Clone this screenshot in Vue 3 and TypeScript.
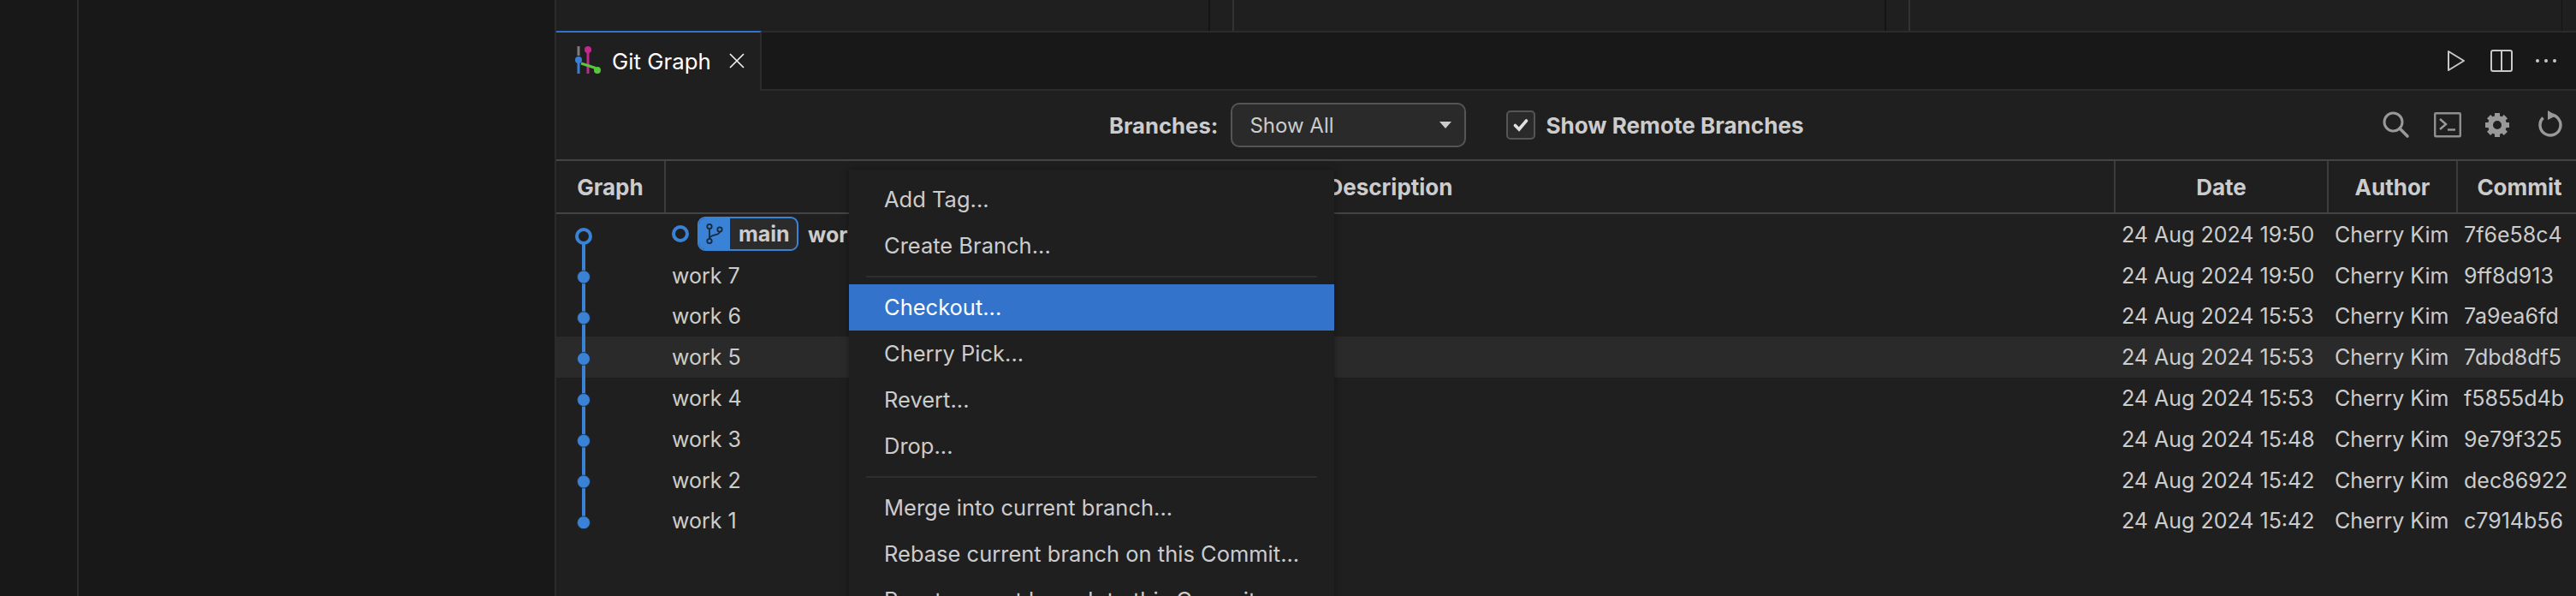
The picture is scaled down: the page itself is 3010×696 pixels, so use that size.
<script setup lang="ts">
type MenuEntry = { label: string; active?: boolean } | { separator: true }

const commits = [
  { title: 'work 8', date: '24 Aug 2024 19:50', hash: '7f6e58c4' },
  { title: 'work 7', date: '24 Aug 2024 19:50', hash: '9ff8d913' },
  { title: 'work 6', date: '24 Aug 2024 15:53', hash: '7a9ea6fd' },
  { title: 'work 5', date: '24 Aug 2024 15:53', hash: '7dbd8df5' },
  { title: 'work 4', date: '24 Aug 2024 15:53', hash: 'f5855d4b' },
  { title: 'work 3', date: '24 Aug 2024 15:48', hash: '9e79f325' },
  { title: 'work 2', date: '24 Aug 2024 15:42', hash: 'dec86922' },
  { title: 'work 1', date: '24 Aug 2024 15:42', hash: 'c7914b56' },
]

const menu: MenuEntry[] = [
  { label: 'Add Tag...' },
  { label: 'Create Branch...' },
  { separator: true },
  { label: 'Checkout...', active: true },
  { label: 'Cherry Pick...' },
  { label: 'Revert...' },
  { label: 'Drop...' },
  { separator: true },
  { label: 'Merge into current branch...' },
  { label: 'Rebase current branch on this Commit...' },
  { label: 'Reset current branch to this Commit...' },
]

const dots = [73.5, 121.3, 169, 217, 264.8, 312.5, 360.3]
const gearTeeth = [0, 45, 90, 135, 180, 225, 270, 315]
</script>

<template>
  <div class="window">
    <div class="activity"></div>
    <div class="sidebar"></div>
    <main class="editor">
      <div class="top-panes">
        <div class="pane first"></div>
        <div class="sash"></div>
        <div class="pane second"></div>
        <div class="sash"></div>
        <div class="pane third"></div>
      </div>

      <div class="tabbar">
        <div class="tab">
          <svg class="tab-icon" width="32" height="36" viewBox="0 0 32 36">
            <rect x="3.5" y="1" width="3" height="11" fill="#7d7d7d" />
            <rect x="3.5" y="20" width="3" height="13" fill="#3a7fd5" />
            <rect x="14.5" y="8" width="3" height="25" fill="#c4288f" />
            <circle cx="16" cy="5" r="4" fill="#c4288f" />
            <line x1="8" y1="21" x2="25" y2="26.5" stroke="#55c93a" stroke-width="3" />
            <circle cx="5" cy="17" r="4" fill="#3a7fd5" />
            <circle cx="27" cy="29" r="4" fill="#55c93a" />
          </svg>
          <span class="tab-title">Git Graph</span>
          <svg class="tab-close" width="18" height="18" viewBox="0 0 18 18">
            <path d="M1 1l16 16M17 1L1 17" stroke="#f0f0f0" stroke-width="1.7" fill="none" />
          </svg>
        </div>
        <div class="tab-actions">
          <svg class="play" width="22" height="26" viewBox="0 0 22 26">
            <path d="M2 2l18 11L2 24z" fill="none" stroke="#c8c8c8" stroke-width="2" stroke-linejoin="round" />
          </svg>
          <svg width="26" height="26" viewBox="0 0 26 26">
            <rect x="1" y="1" width="24" height="24" rx="2" fill="none" stroke="#c8c8c8" stroke-width="2" />
            <line x1="13" y1="1" x2="13" y2="25" stroke="#c8c8c8" stroke-width="2" />
          </svg>
          <svg width="26" height="6" viewBox="0 0 26 6">
            <circle cx="3" cy="3" r="2" fill="#c8c8c8" />
            <circle cx="13" cy="3" r="2" fill="#c8c8c8" />
            <circle cx="23" cy="3" r="2" fill="#c8c8c8" />
          </svg>
        </div>
      </div>

      <div class="toolbar">
        <div class="controls">
          <span class="branch-label">Branches:</span>
          <div class="select">
            <span>Show All</span>
            <i class="select-arrow"></i>
          </div>
          <div class="checkbox">
            <svg width="20" height="18" viewBox="0 0 20 18">
              <path d="M3.5 9.5l4.5 4.5L16.5 4" fill="none" stroke="#e0e0e0" stroke-width="3.6" stroke-linecap="round" />
            </svg>
          </div>
          <span class="remote-label">Show Remote Branches</span>
        </div>
        <div class="tools">
          <svg width="32" height="32" viewBox="0 0 32 32">
            <circle cx="12.5" cy="12.5" r="10.5" fill="none" stroke="#999" stroke-width="3" />
            <line x1="20" y1="20" x2="29" y2="29" stroke="#999" stroke-width="3.6" stroke-linecap="round" />
          </svg>
          <svg width="32" height="30" viewBox="0 0 32 30">
            <rect x="1.2" y="1.2" width="29.6" height="27" rx="1" fill="none" stroke="#8f8f8f" stroke-width="2.4" />
            <path d="M7 8l7 6-7 6" fill="none" stroke="#999" stroke-width="2.4" />
            <line x1="16" y1="20.5" x2="25" y2="20.5" stroke="#999" stroke-width="2.4" />
          </svg>
          <svg class="gear" width="28" height="30" viewBox="0 0 28 30">
            <g transform="translate(14 15)">
              <rect
                v-for="deg in gearTeeth"
                :key="deg"
                x="-3"
                y="-14"
                width="6"
                height="7"
                fill="#999"
                :transform="`rotate(${deg})`"
              />
              <circle r="8" fill="none" stroke="#999" stroke-width="6" />
            </g>
          </svg>
          <svg width="28" height="34" viewBox="0 0 28 34">
            <path d="M14 5A12 12 0 1 1 5.5 8.5" fill="none" stroke="#999" stroke-width="3.4" />
            <path d="M11 0l10 6-10 5z" fill="#999" />
          </svg>
        </div>
      </div>

      <div class="table">
        <div class="row head">
          <div class="cell center">Graph</div>
          <div class="cell center">Description</div>
          <div class="cell center">Date</div>
          <div class="cell center">Author</div>
          <div class="cell center">Commit</div>
        </div>
        <div class="rows">
          <div
            v-for="(commit, i) in commits"
            :key="commit.hash"
            class="row body"
            :class="{ hovered: i === 3, current: i === 0 }"
          >
            <div class="cell"></div>
            <div class="cell desc">
              <template v-if="i === 0">
                <svg class="head-ring" width="20" height="20" viewBox="0 0 20 20">
                  <circle cx="10" cy="10" r="8" fill="none" stroke="#3a82d6" stroke-width="4" />
                </svg>
                <span class="ref">
                  <span class="ref-icon">
                    <svg width="24" height="26" viewBox="0 0 24 26">
                      <g fill="none" stroke="#16283c" stroke-width="1.8">
                        <circle cx="6" cy="4.5" r="2.7" />
                        <circle cx="6" cy="21.5" r="2.7" />
                        <circle cx="18" cy="8" r="2.7" />
                        <path d="M6 7.2v11.6M18 10.7c0 4.5-12 3-12 8" />
                      </g>
                    </svg>
                  </span>
                  <span class="ref-name">main</span>
                </span>
              </template>
              <span class="title">{{ commit.title }}</span>
            </div>
            <div class="cell data">{{ commit.date }}</div>
            <div class="cell data">Cherry Kim</div>
            <div class="cell data">{{ commit.hash }}</div>
          </div>

          <svg class="graph" width="64" height="384" viewBox="0 0 64 384">
            <line x1="32" y1="26" x2="32" y2="360" stroke="#3a82d6" stroke-width="4" />
            <circle cx="32" cy="26" r="8" fill="#1f1f1f" stroke="#3a82d6" stroke-width="4" />
            <circle
              v-for="y in dots"
              :key="y"
              cx="32"
              :cy="y"
              r="7.5"
              fill="#3a82d6"
              stroke="#1f2a38"
              stroke-width="0.8"
            />
          </svg>
        </div>

        <div class="context-menu">
          <template v-for="(entry, i) in menu" :key="i">
            <div v-if="'separator' in entry" class="menu-sep"></div>
            <div v-else class="menu-item" :class="{ active: entry.active }">{{ entry.label }}</div>
          </template>
        </div>
      </div>
    </main>
  </div>
</template>

<style>
html,
body {
  margin: 0;
  background: #181818;
}
</style>

<style scoped>
.window {
  display: flex;
  width: 3010px;
  height: 696px;
  overflow: hidden;
  background: #181818;
  color: #cccccc;
  font-family: Inter, "Liberation Sans", sans-serif;
  font-size: 25px;
}
.activity {
  flex: none;
  width: 90px;
  border-right: 2px solid #2b2b2b;
}
.sidebar {
  flex: none;
  width: 556px;
  border-right: 2px solid #2b2b2b;
}
.editor {
  flex: 1;
  min-width: 0;
  display: flex;
  flex-direction: column;
  background: #1f1f1f;
}

.top-panes {
  flex: none;
  display: flex;
  height: 36px;
}
.pane.first {
  width: 762px;
  border-right: 2px solid #141414;
}
.pane.second {
  width: 760px;
  border-right: 2px solid #141414;
}
.pane.third {
  flex: 1;
  margin-right: 16px;
  border-right: 1px solid #141414;
}
.sash {
  width: 26px;
  border-right: 2px solid #333333;
}

.tabbar {
  flex: none;
  display: flex;
  justify-content: space-between;
  height: 70px;
  box-sizing: border-box;
  background: #181818;
  border-top: 2px solid #2b2b2b;
  border-bottom: 2px solid #2b2b2b;
}
.tab {
  display: flex;
  align-items: center;
  width: 240px;
  height: 70px;
  margin-top: -2px;
  box-sizing: border-box;
  padding: 0 0 2px 21px;
  background: #1f1f1f;
  border-top: 2px solid #3373cc;
  border-right: 2px solid #2b2b2b;
  color: #ffffff;
}
.tab-icon {
  flex: none;
}
.tab-title {
  margin-left: 12px;
  font-size: 25.8px;
}
.tab-close {
  flex: none;
  margin-left: 21px;
}
.tab-actions {
  display: flex;
  align-items: center;
  gap: 26px;
  padding-right: 22px;
}
.play {
  margin-right: 3px;
}

.toolbar {
  flex: none;
  display: flex;
  align-items: center;
  height: 82px;
  box-sizing: border-box;
  border-bottom: 2px solid #444444;
  padding: 0 16px 0 646px;
}
.controls {
  display: flex;
  align-items: center;
}
.branch-label {
  font-size: 25.7px;
  font-weight: 700;
}
.remote-label {
  margin-left: 12px;
  font-size: 26.1px;
  font-weight: 700;
}
.select {
  display: flex;
  align-items: center;
  justify-content: space-between;
  width: 275px;
  height: 52px;
  box-sizing: border-box;
  margin-left: 15px;
  padding: 0 15px 0 20px;
  background: #2a2a2a;
  border: 2px solid #555555;
  border-radius: 10px;
  font-size: 24px;
}
.select-arrow {
  width: 0;
  height: 0;
  border-left: 7px solid transparent;
  border-right: 7px solid transparent;
  border-top: 8px solid #cccccc;
}
.checkbox {
  display: flex;
  align-items: center;
  justify-content: center;
  width: 34px;
  height: 34px;
  box-sizing: border-box;
  margin-left: 47px;
  background: #2a2a2a;
  border: 2px solid #555555;
  border-radius: 5px;
}
.tools {
  display: flex;
  align-items: center;
  gap: 28px;
  margin-left: auto;
}
.gear {
  margin-right: 6px;
}

.table {
  flex: 1;
  position: relative;
  min-height: 0;
}
.row {
  display: grid;
  grid-template-columns: 128px 1694px 249px 151px 138px;
}
.row.head {
  height: 62px;
  box-sizing: border-box;
  border-bottom: 2px solid #444444;
  font-size: 26px;
  font-weight: 700;
}
.row.head .cell {
  box-sizing: border-box;
  border-right: 2px solid #3c3c3c;
}
.row.head .cell:last-child {
  border-right: 0;
  padding-left: 6px;
}
.cell {
  display: flex;
  align-items: center;
  white-space: nowrap;
  overflow: hidden;
}
.cell.center {
  justify-content: center;
}
.rows {
  position: relative;
}
.row.body {
  height: 47.8px;
}
.row.hovered {
  background: #2a2a2a;
}
.row.current .desc {
  font-weight: 700;
}
.desc {
  padding-left: 7px;
}
.data {
  padding-left: 7px;
}
.head-ring {
  flex: none;
  margin-right: 10px;
  margin-top: -2px;
}
.ref {
  flex: none;
  display: flex;
  height: 40px;
  width: 118px;
  box-sizing: border-box;
  margin-right: 11px;
  margin-top: -2px;
  border: 2px solid #3a82d6;
  border-radius: 9px;
  overflow: hidden;
  background: #2b2b2b;
}
.ref-icon {
  flex: none;
  display: flex;
  align-items: center;
  justify-content: center;
  width: 36px;
  background: #3a82d6;
}
.ref-name {
  padding-left: 10px;
  line-height: 36px;
}
.graph {
  position: absolute;
  left: 0;
  top: 0;
  pointer-events: none;
}

.context-menu {
  position: absolute;
  left: 342px;
  top: 10px;
  width: 567px;
  box-sizing: border-box;
  padding: 8px 0;
  background: #1f1f1f;
  box-shadow: 0 0 8px rgba(0, 0, 0, 0.36);
  font-size: 25.5px;
}
.menu-item {
  height: 54px;
  line-height: 54px;
  padding-left: 41px;
  white-space: nowrap;
}
.menu-item.active {
  background: #3373cc;
  color: #ffffff;
}
.menu-sep {
  height: 2px;
  margin: 8px 20px;
  background: #2e2e2e;
}
</style>
